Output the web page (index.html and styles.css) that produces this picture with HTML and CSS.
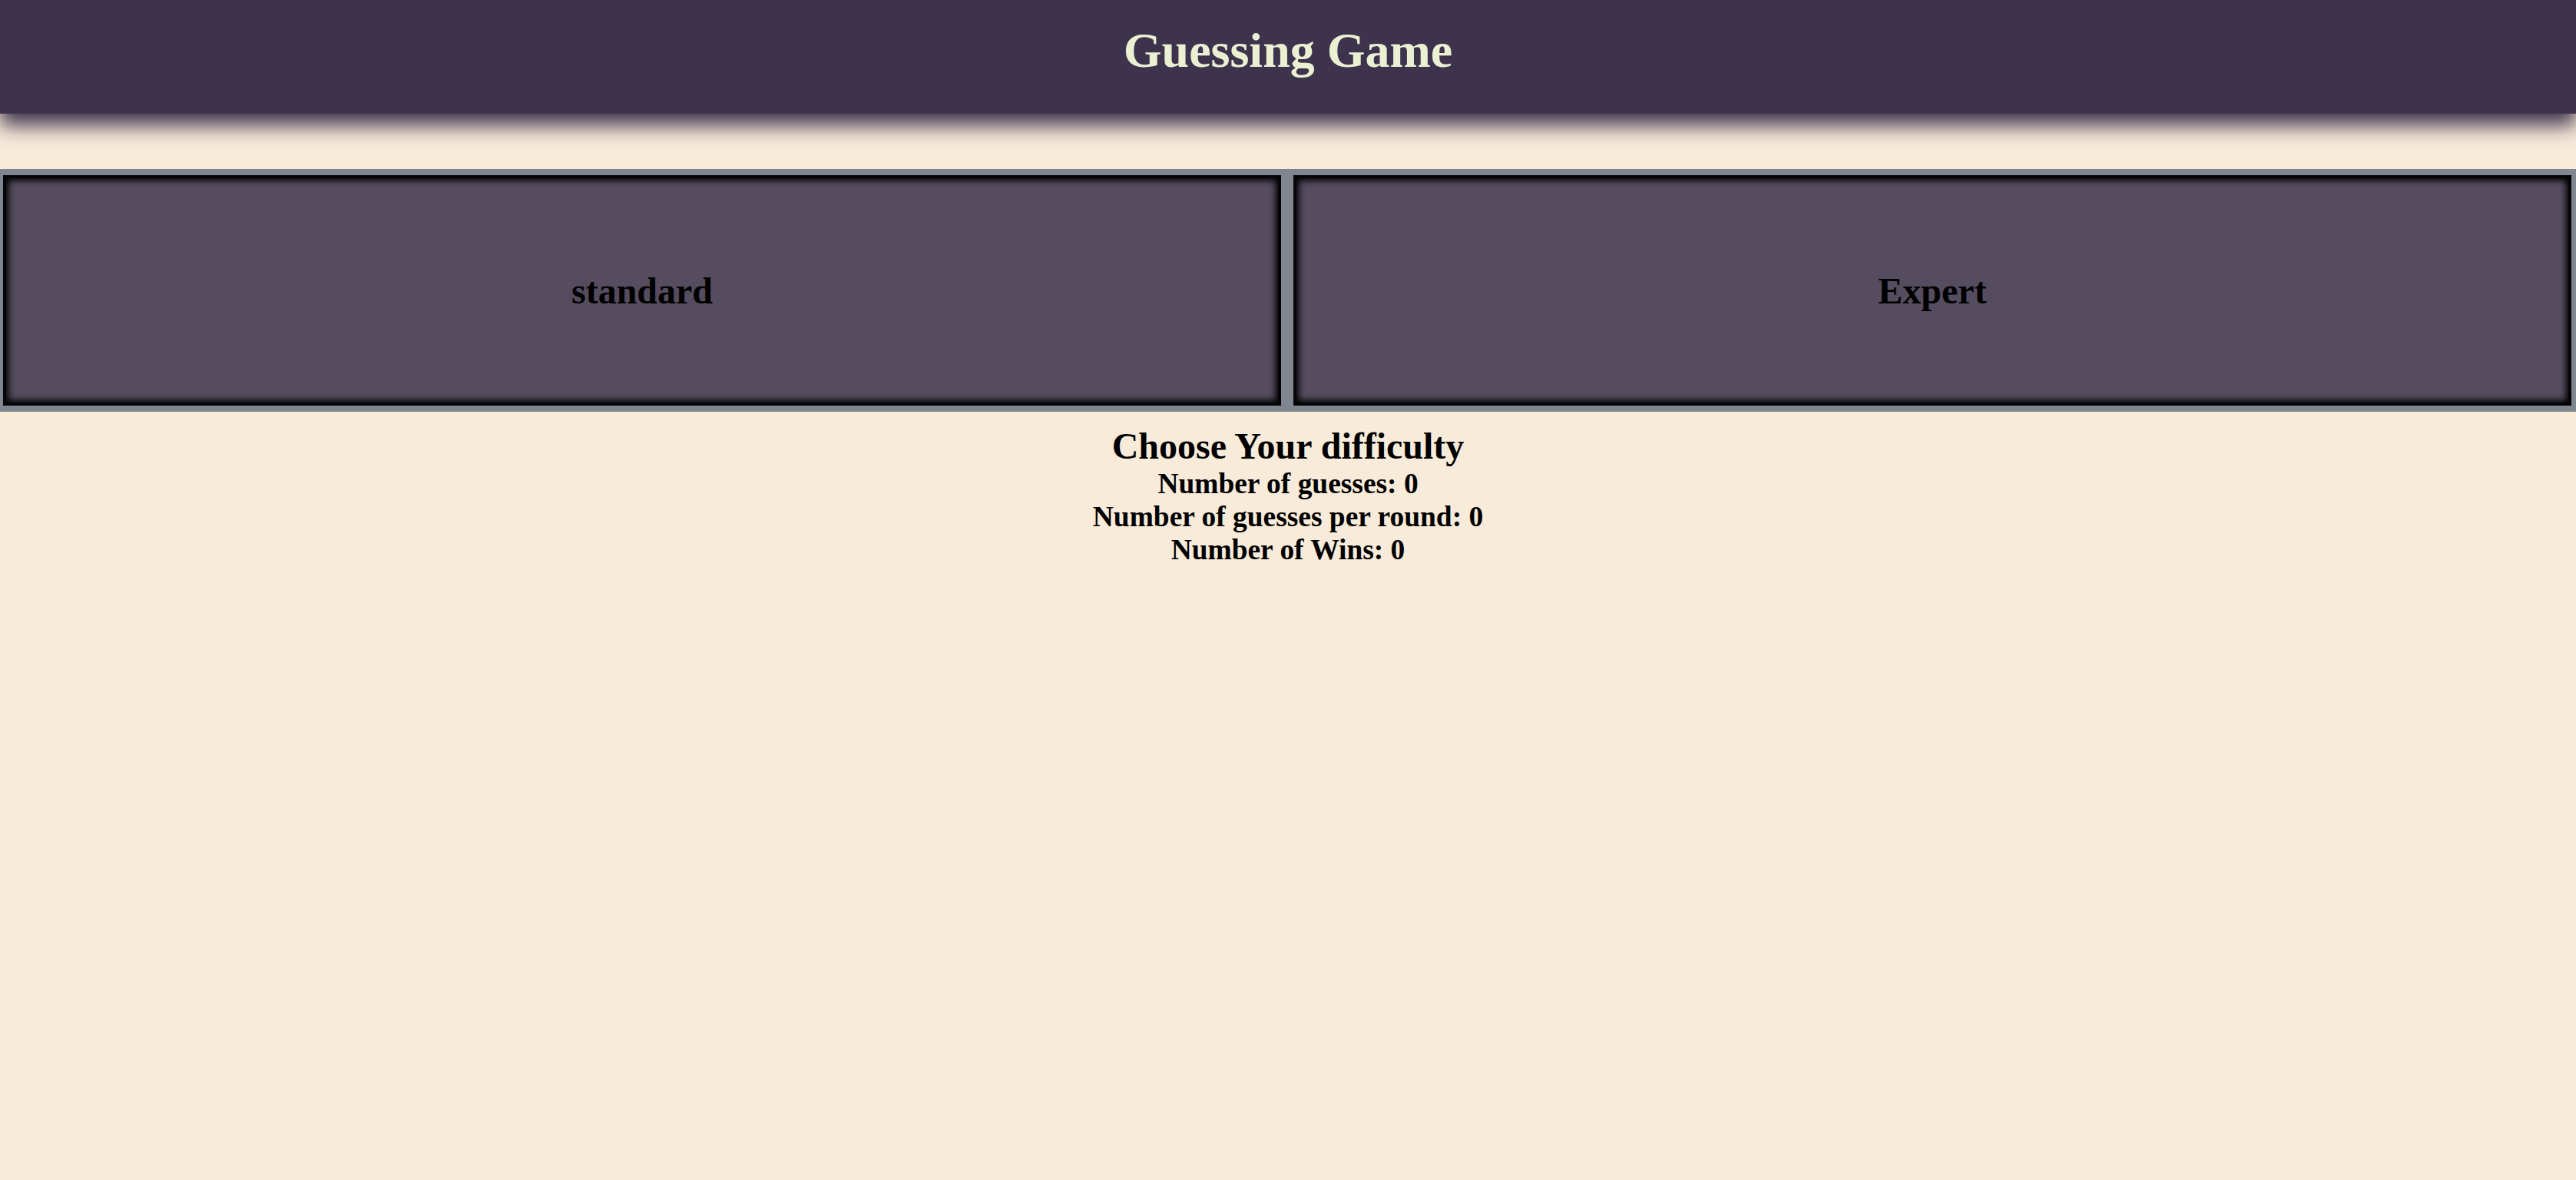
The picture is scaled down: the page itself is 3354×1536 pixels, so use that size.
FILE: index.html
```html
<!DOCTYPE html>
<html lang="en">
<head>
<meta charset="utf-8">
<title>Guessing Game</title>
<link rel="stylesheet" href="styles.css">
</head>
<body>
  <header class="site-header">
    <h1 class="title">Guessing Game</h1>
  </header>
  <main class="content">
    <section class="modes">
      <div class="mode-card"><h2 class="mode-label">standard</h2></div>
      <div class="mode-card"><h2 class="mode-label">Expert</h2></div>
    </section>
    <section class="status">
      <h2 class="prompt">Choose Your difficulty</h2>
      <h3 class="stat">Number of guesses: 0</h3>
      <h3 class="stat">Number of guesses per round: 0</h3>
      <h3 class="stat">Number of Wins: 0</h3>
    </section>
  </main>
</body>
</html>
```
FILE: styles.css
```css
html, body {
  margin: 0;
  padding: 0;
}
body {
  background: #f8ebd9;
  font-family: "Liberation Serif", "Times New Roman", serif;
  font-size: 32px;
  color: #000;
  min-height: 1536px;
}
.site-header {
  background: #3d334d;
  height: 148px;
  box-sizing: border-box;
  padding-top: 29px;
  box-shadow: 0 15px 25px #3d334d;
  position: relative;
  z-index: 1;
}
.title {
  margin: 0;
  font-size: 64px;
  font-weight: bold;
  text-align: center;
  color: #ecf0d3;
  line-height: normal;
}
.content {
  padding-top: 72px;
}
.modes {
  display: flex;
  gap: 16px;
  background: #80868f;
  padding: 8px 6px 8px 4px;
}
.mode-card {
  flex: 1 1 0;
  height: 300px;
  box-sizing: border-box;
  background: #554c5f;
  border: 4px solid #050508;
  box-shadow: inset 0 0 9px 3px #000;
  display: flex;
  align-items: center;
  justify-content: center;
}
.mode-label {
  margin: 0;
  font-size: 48px;
  font-weight: bold;
  line-height: normal;
}
.status {
  text-align: center;
}
.prompt {
  margin: 17px 0 0;
  font-size: 48px;
  font-weight: bold;
  line-height: normal;
}
.stat {
  margin: 0;
  font-size: 37.44px;
  font-weight: bold;
  line-height: normal;
}
```
